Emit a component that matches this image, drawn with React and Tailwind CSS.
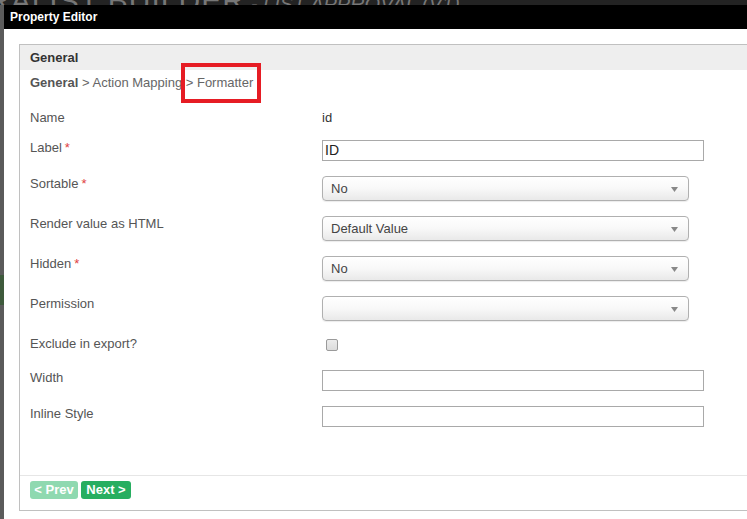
import React from "react";

const font = { fontFamily: '"Liberation Sans", Arial, sans-serif' };

const Req = () => <span className="text-[#e04040] ml-[3px]">*</span>;

const Select = ({ value }) => (
  <div className="relative w-[367px] h-[25px] rounded-[4px] border border-[#b0b0b0] bg-gradient-to-b from-white via-[#f8f8f8] to-[#e9e9e9] shadow-[0_1px_1px_rgba(0,0,0,0.08)] flex items-center pl-[8px] text-[13px] text-[#444]">
    {value}
    <svg className="absolute right-[10px] top-[10px]" width="7" height="5" viewBox="0 0 7 5">
      <path d="M0 0h7L3.5 5z" fill="#888" />
    </svg>
  </div>
);

const TextInput = ({ value }) => (
  <div className="w-[382px] h-[21px] border border-[#a9a9a9] bg-white flex items-center pl-[2px] text-[14px] text-[#222]">
    {value}
  </div>
);

const Row = ({ label, req, h, children }) => (
  <div className="flex" style={{ height: h }}>
    <div className="w-[292px] text-[13px] leading-[15px] text-[#555]">
      {label}
      {req && <Req />}
    </div>
    <div>{children}</div>
  </div>
);

export default function App() {
  return (
    <div className="relative w-[747px] h-[519px] overflow-hidden bg-[#5b5b5b] flex flex-col" style={font}>
      {/* page behind the dialog */}
      <div className="h-[5px] bg-[#232323] overflow-hidden shrink-0">
        <div className="-mt-[22px] -ml-[12px] whitespace-nowrap text-[#777]">
          <span className="text-[30px] tracking-[1px]">RALIST BUILDER</span>
          <span className="text-[20px] italic ml-[6px]">- LIST APPROVAL (V1)</span>
        </div>
      </div>
      <div className="flex flex-1">
        <div className="w-[4px] shrink-0 flex flex-col">
          <div className="h-[270px]" />
          <div className="h-[30px] bg-[#3e5a3c]" />
        </div>

        {/* dialog */}
        <div className="flex-1 flex flex-col bg-white">
          <div className="h-[24px] bg-black text-white font-bold text-[12px] flex items-center pl-[6px]">
            Property Editor
          </div>
          <div className="pl-[15px] pt-[15px]">
            <div className="w-[760px] h-[467px] border border-[#c0c0c0] flex flex-col">
              <div className="h-[25px] bg-[#eeeeee] flex items-center pl-[10px] text-[13px] font-bold text-[#333]">
                General
              </div>
              <div className="h-[40px] pt-[5px] pl-[10px] text-[13px] leading-[15px] text-[#666]">
                <span className="font-bold text-[#555]">General</span> &gt; Action Mapping &gt; Formatter
              </div>

              <div className="flex-1 pl-[10px]">
                <Row label="Name" h={30}>
                  <div className="text-[13px] leading-[15px] text-[#333]">id</div>
                </Row>
                <Row label="Label" req h={36}>
                  <TextInput value="ID" />
                </Row>
                <Row label="Sortable" req h={40}>
                  <Select value="No" />
                </Row>
                <Row label="Render value as HTML" h={40}>
                  <Select value="Default Value" />
                </Row>
                <Row label="Hidden" req h={40}>
                  <Select value="No" />
                </Row>
                <Row label="Permission" h={40}>
                  <Select value="" />
                </Row>
                <Row label="Exclude in export?" h={34}>
                  <div className="mt-[3px] ml-[4px] w-[12px] h-[12px] rounded-[2px] border border-[#9a9a9a] bg-gradient-to-b from-[#ececec] to-[#dcdcdc]" />
                </Row>
                <Row label="Width" h={36}>
                  <TextInput value="" />
                </Row>
                <Row label="Inline Style" h={36}>
                  <TextInput value="" />
                </Row>
              </div>

              <div className="h-[35px] border-t border-[#e6e6e6] pl-[10px] pt-[5px] flex gap-[3px]">
                <button className="h-[18px] w-[48px] rounded-[3px] bg-[#8fd9b0] text-white font-bold text-[13px] leading-[18px]">
                  &lt; Prev
                </button>
                <button className="h-[18px] w-[50px] rounded-[3px] bg-[#27ae60] text-white font-bold text-[13px] leading-[18px]">
                  Next &gt;
                </button>
              </div>
            </div>
          </div>
        </div>
      </div>

      {/* annotation box */}
      <div className="absolute left-[181px] top-[63px] w-[80px] h-[40px] border-4 border-[#e61c24]" />
    </div>
  );
}
